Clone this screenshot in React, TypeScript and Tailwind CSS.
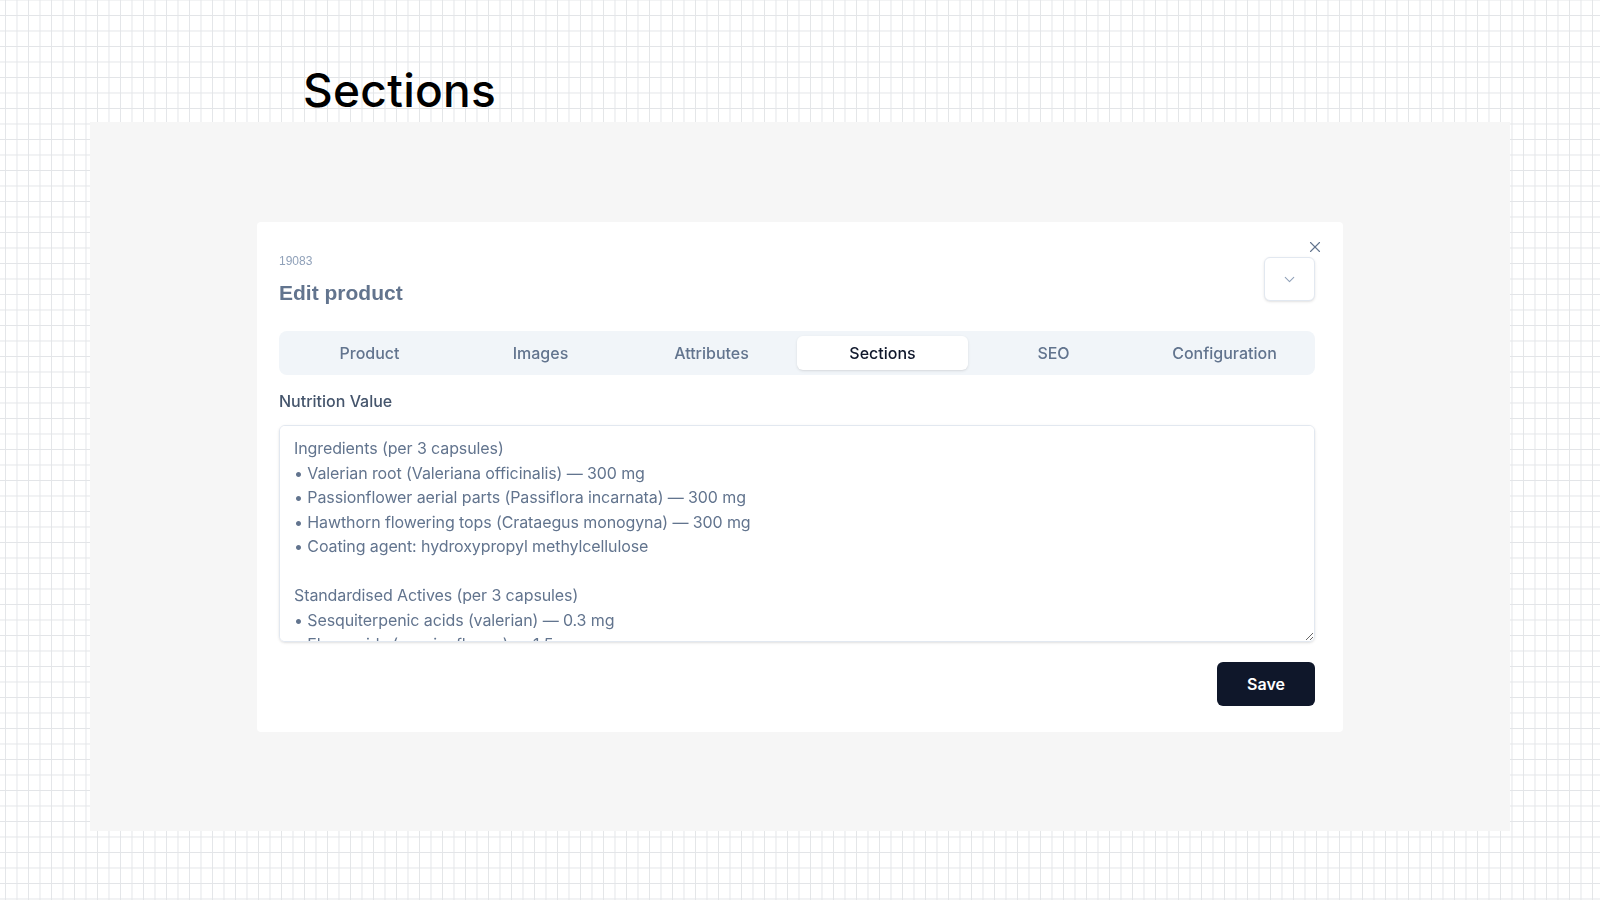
import React from 'react';
import { ChevronDown, X } from 'lucide-react';

const tabs = ['Product', 'Images', 'Attributes', 'Sections', 'SEO', 'Configuration'];

const nutrition = `Ingredients (per 3 capsules)
• Valerian root (Valeriana officinalis) — 300 mg
• Passionflower aerial parts (Passiflora incarnata) — 300 mg
• Hawthorn flowering tops (Crataegus monogyna) — 300 mg
• Coating agent: hydroxypropyl methylcellulose

Standardised Actives (per 3 capsules)
• Sesquiterpenic acids (valerian) — 0.3 mg
• Flavonoids (passionflower) — 1.5 mg
• Oligomeric procyanidins (hawthorn) — 6 mg`;

export default function App() {
  return (
    <div className="relative h-[900px] w-[1600px] overflow-hidden bg-white bg-[linear-gradient(to_right,#e3e5e8_1px,transparent_1px),linear-gradient(to_bottom,#e3e5e8_1px,transparent_1px)] bg-[size:11.5px_15.5px] bg-[position:5px_15px] font-['Inter',sans-serif]">
      <h1 className="pl-[303px] pt-[58px] text-[46px] font-medium leading-[64px] tracking-[0.3px] text-black">
        Sections
      </h1>

      {/* grey stage */}
      <div className="ml-[90px] h-[709px] w-[1420px] bg-[#f6f6f6] pl-[167px] pt-[100px]">
        {/* modal card */}
        <div className="relative w-[1086px] rounded bg-white pb-[26px] pl-[22px] pr-[28px] pt-[31px]">
          <button className="absolute right-[19px] top-[16px] text-slate-500">
            <X size={18} strokeWidth={1.5} />
          </button>

          <div className="flex items-start justify-between">
            <div>
              <div className="text-xs leading-4 text-slate-400 font-['Liberation_Sans',Arial,sans-serif]">19083</div>
              <h2 className="mt-[10px] text-[21px] font-bold leading-7 text-slate-500 font-['Liberation_Sans',Arial,sans-serif]">
                Edit product
              </h2>
            </div>
            <button className="mt-[4px] flex h-[44px] w-[51px] items-center justify-center rounded-md border border-slate-200 bg-white text-slate-400 shadow-sm">
              <ChevronDown size={17} strokeWidth={1.5} />
            </button>
          </div>

          <div className="mt-[24px] grid h-[44px] grid-cols-6 rounded-lg bg-slate-100 p-[5px]">
            {tabs.map((t) => (
              <div
                key={t}
                className={
                  t === 'Sections'
                    ? 'flex items-center justify-center rounded-md bg-white text-base font-medium text-slate-900 shadow-sm'
                    : 'flex items-center justify-center text-base font-medium text-slate-500'
                }
              >
                {t}
              </div>
            ))}
          </div>

          <div className="mt-[14px] text-base font-medium leading-6 text-slate-600">Nutrition Value</div>

          <textarea
            className="mt-3 block h-[217px] w-full resize-y rounded-md border border-slate-200 bg-white px-[14px] pb-[11px] pt-[10px] text-base leading-[24.5px] tracking-[-0.1px] text-slate-500 shadow-sm outline-none"
            defaultValue={nutrition}
          />

          <div className="mt-5 flex justify-end">
            <button className="h-[44px] w-[98px] rounded-md bg-[#0f172a] text-base font-semibold text-white">
              Save
            </button>
          </div>
        </div>
      </div>
    </div>
  );
}
